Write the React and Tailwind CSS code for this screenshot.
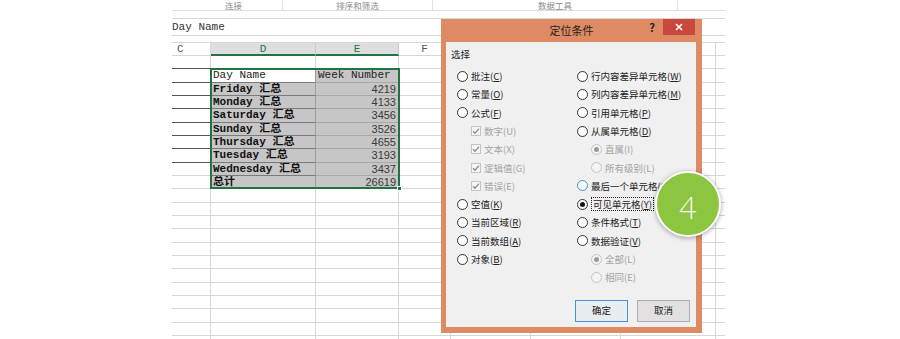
import clsx from 'clsx';

const MONO = "font-['Liberation_Mono','Noto_Sans_CJK_SC',monospace]";

// sheet column widths: C (clipped), D, E, F, G, H, I, J (clipped)
const COLS = ['w-[39px]', 'w-[105px]', 'w-[83px]', 'w-[52px]', 'w-[80px]', 'w-[90px]', 'w-[95px]', 'flex-1'];

const data = [
  null,
  ['Day Name', 'Week Number'],
  ['Friday 汇总', '4219'],
  ['Monday 汇总', '4133'],
  ['Saturday 汇总', '3456'],
  ['Sunday 汇总', '3526'],
  ['Thursday 汇总', '4655'],
  ['Tuesday 汇总', '3193'],
  ['Wednesday 汇总', '3437'],
  ['总计', '26619'],
];

const ROWS = Array.from({ length: 22 }, (_, i) => data[i] ?? null);

const Radio = ({ checked, disabled, hover }) => (
  <span
    className={clsx(
      'w-[11px] h-[11px] rounded-full border flex items-center justify-center shrink-0',
      disabled ? 'border-[#c4c4c4] bg-[#f4f4f4]' : hover ? 'border-[#3c8fd6] bg-white' : 'border-[#333] bg-white'
    )}
  >
    {checked && <span className={clsx('w-[5px] h-[5px] rounded-full', disabled ? 'bg-[#9a9a9a]' : 'bg-[#111]')} />}
  </span>
);

const Check = () => (
  <span className="w-[10px] h-[10px] border border-[#c4c4c4] bg-[#f6f6f6] flex items-center justify-center shrink-0">
    <svg width="8" height="8" viewBox="0 0 8 8">
      <path d="M1 4.2 L3 6.2 L7 1.6" fill="none" stroke="#8c8c8c" strokeWidth="1.3" />
    </svg>
  </span>
);

const Label = ({ text, k, disabled }) => (
  <span className={clsx('whitespace-nowrap', disabled ? 'text-[#a3a3a3]' : 'text-[#222]')}>
    {text}(
    {disabled ? k : <span className="underline underline-offset-1">{k}</span>})
  </span>
);

const Option = ({ type = 'radio', text, k, disabled, checked, hover, sub, focus }) => (
  <div className={clsx('h-[18.3px] flex items-center gap-[3px]', sub && 'pl-[14px]')}>
    {type === 'check' ? <Check /> : <Radio checked={checked} disabled={disabled} hover={hover} />}
    {focus ? (
      <span className="border border-dotted border-[#222] px-px leading-[12px]">
        <Label text={text} k={k} disabled={disabled} />
      </span>
    ) : (
      <Label text={text} k={k} disabled={disabled} />
    )}
  </div>
);

const leftOptions = [
  { text: '批注', k: 'C' },
  { text: '常量', k: 'O' },
  { text: '公式', k: 'F' },
  { type: 'check', text: '数字', k: 'U', disabled: true, sub: true },
  { type: 'check', text: '文本', k: 'X', disabled: true, sub: true },
  { type: 'check', text: '逻辑值', k: 'G', disabled: true, sub: true },
  { type: 'check', text: '错误', k: 'E', disabled: true, sub: true },
  { text: '空值', k: 'K' },
  { text: '当前区域', k: 'R' },
  { text: '当前数组', k: 'A' },
  { text: '对象', k: 'B' },
];

const rightOptions = [
  { text: '行内容差异单元格', k: 'W' },
  { text: '列内容差异单元格', k: 'M' },
  { text: '引用单元格', k: 'P' },
  { text: '从属单元格', k: 'D' },
  { text: '直属', k: 'I', disabled: true, checked: true, sub: true },
  { text: '所有级别', k: 'L', disabled: true, sub: true },
  { text: '最后一个单元格', k: 'S', hover: true },
  { text: '可见单元格', k: 'Y', checked: true, focus: true },
  { text: '条件格式', k: 'T' },
  { text: '数据验证', k: 'V' },
  { text: '全部', k: 'L', disabled: true, checked: true, sub: true },
  { text: '相同', k: 'E', disabled: true, sub: true },
];

const Sheet = () => (
  <div className="relative w-[553px] h-full overflow-hidden flex flex-col">
    {/* ribbon group labels */}
    <div className="h-[11px] shrink-0 flex border-b border-[#dcdcdc] text-[8.5px] leading-[10px] text-[#8a8a8a] font-['Noto_Sans_CJK_SC',sans-serif]">
      <div className="ml-[13px] w-[98px] border-r border-[#e2e2e2] text-center">连接</div>
      <div className="w-[150px] border-r border-[#e2e2e2] text-center">排序和筛选</div>
      <div className="w-[245px] border-r border-[#e2e2e2] text-center">数据工具</div>
    </div>

    {/* formula bar */}
    <div className={clsx('mt-[7px] h-[18px] shrink-0 border-y border-[#d6d6d6] flex items-center text-[11px] text-[#333]', MONO)}>
      <span>Day Name</span>
    </div>

    {/* column headers */}
    <div className={clsx('mt-[6px] h-[14px] shrink-0 flex border-t border-[#d6d6d6] text-[11px] leading-[12px]', MONO)}>
      <div className={clsx(COLS[0], 'border-r border-b border-[#d6d6d6] pl-[5px] text-[#555]')}>C</div>
      <div className={clsx(COLS[1], 'bg-[#dedede] border-r border-[#c8c8c8] border-b-2 border-b-[#217346] text-center text-[#217346]')}>D</div>
      <div className={clsx(COLS[2], 'bg-[#dedede] border-r border-[#c8c8c8] border-b-2 border-b-[#217346] text-center text-[#217346]')}>E</div>
      <div className={clsx(COLS[3], 'border-r border-b border-[#d6d6d6] text-center text-[#555]')}>F</div>
      <div className={clsx(COLS[4], 'border-r border-b border-[#d6d6d6]')} />
      <div className={clsx(COLS[5], 'border-r border-b border-[#d6d6d6]')} />
      <div className={clsx(COLS[6], 'border-r border-b border-[#d6d6d6]')} />
      <div className={clsx(COLS[7], 'border-b border-[#d6d6d6]')} />
    </div>

    {/* grid rows */}
    {ROWS.map((row, i) => {
      const inSel = i >= 1 && i <= 9;
      const darkC = i <= 7;
      return (
        <div key={i} className="h-[13.33px] shrink-0 flex text-[11px] leading-[12px]">
          <div className={clsx(COLS[0], 'border-r border-[#d6d6d6] border-b', darkC ? 'border-b-[#555]' : 'border-b-[#d6d6d6]')} />
          <div
            className={clsx(
              COLS[1],
              'border-r border-b pl-[2px] whitespace-nowrap overflow-hidden',
              MONO,
              inSel ? 'border-r-[#9e9e9e] border-b-[#7a7a7a]' : 'border-[#d6d6d6]',
              inSel && i > 1 && 'bg-[#c6c6c6] font-bold text-[#111]',
              i === 1 && 'bg-white text-[#222]'
            )}
          >
            {row?.[0]}
          </div>
          <div
            className={clsx(
              COLS[2],
              'border-r border-b whitespace-nowrap overflow-hidden',
              inSel ? 'bg-[#c6c6c6] border-[#a8a8a8]' : 'border-[#d6d6d6]',
              i === 1 ? clsx(MONO, 'pl-[2px] text-[#222]') : "font-['Liberation_Sans',sans-serif] text-right pr-[2px] text-[#3a3a3a]"
            )}
          >
            {row?.[1]}
          </div>
          <div className={clsx(COLS[3], 'border-r border-b border-[#d6d6d6]')} />
          <div className={clsx(COLS[4], 'border-r border-b border-[#d6d6d6]')} />
          <div className={clsx(COLS[5], 'border-r border-b border-[#d6d6d6]')} />
          <div className={clsx(COLS[6], 'border-r border-b border-[#d6d6d6]')} />
          <div className={clsx(COLS[7], 'border-b border-[#d6d6d6]')} />
        </div>
      );
    })}

    {/* selection outline + fill handle */}
    <div className="absolute left-[38px] top-[68px] w-[190px] h-[121px] border-2 border-[#217346]" />
    <div className="absolute left-[225px] top-[186px] w-[5px] h-[5px] bg-[#217346] border border-white" />
  </div>
);

const Dialog = () => (
  <div className="absolute left-[441px] top-[19px] w-[261px] h-[314px] bg-[#de8a63] flex flex-col font-['Noto_Sans_CJK_SC',sans-serif]">
    <div className="h-[23px] shrink-0 flex">
      <div className="flex-1" />
      <div className="text-[11px] leading-[23px] text-[#222]">定位条件</div>
      <div className="flex-1 flex justify-end">
        <span className="text-[11px] font-bold leading-[16px] text-[#222] mr-[8px]">?</span>
        <div className="w-[32px] h-[16px] mr-[7px] bg-[#c9473f] flex items-center justify-center">
          <svg width="8" height="8" viewBox="0 0 8 8">
            <path d="M1 1 L7 7 M7 1 L1 7" stroke="#fff" strokeWidth="1.6" />
          </svg>
        </div>
      </div>
    </div>
    <div className="flex-1 mx-[6px] mb-[6px] ml-[5px] bg-[#f0f0f0] flex flex-col text-[9.5px]">
      <div className="h-[25px] shrink-0 pl-[5px] pt-[6px] leading-[12px] text-[#222]">选择</div>
      <div className="flex pl-[11px]">
        <div className="w-[120px] flex flex-col">
          {leftOptions.map((o, i) => (
            <Option key={i} {...o} />
          ))}
        </div>
        <div className="flex-1 flex flex-col">
          {rightOptions.map((o, i) => (
            <Option key={i} {...o} />
          ))}
        </div>
      </div>
      <div className="mt-[13px] flex justify-end gap-[9px] pr-[6px]">
        <button className="w-[53px] h-[22px] border border-[#4a90d9] bg-[#e8edf2] text-[#222]">确定</button>
        <button className="w-[53px] h-[22px] border border-[#adadad] bg-[#e1e1e1] text-[#222]">取消</button>
      </div>
    </div>
  </div>
);

export default function App() {
  return (
    <div className="relative w-[900px] h-[339px] bg-white overflow-hidden flex">
      <div className="w-[172px] shrink-0" />
      <Sheet />
      <Dialog />
      {/* step badge */}
      <div className="absolute left-[655px] top-[171px] w-[66px] h-[66px] rounded-full bg-[#8cc53f] border-2 border-white shadow-[0_1px_5px_rgba(0,0,0,0.35)] flex items-center justify-center">
        <span className="text-[31px] font-light text-white font-['Lato',sans-serif] leading-none translate-y-[3px]">4</span>
      </div>
    </div>
  );
}
